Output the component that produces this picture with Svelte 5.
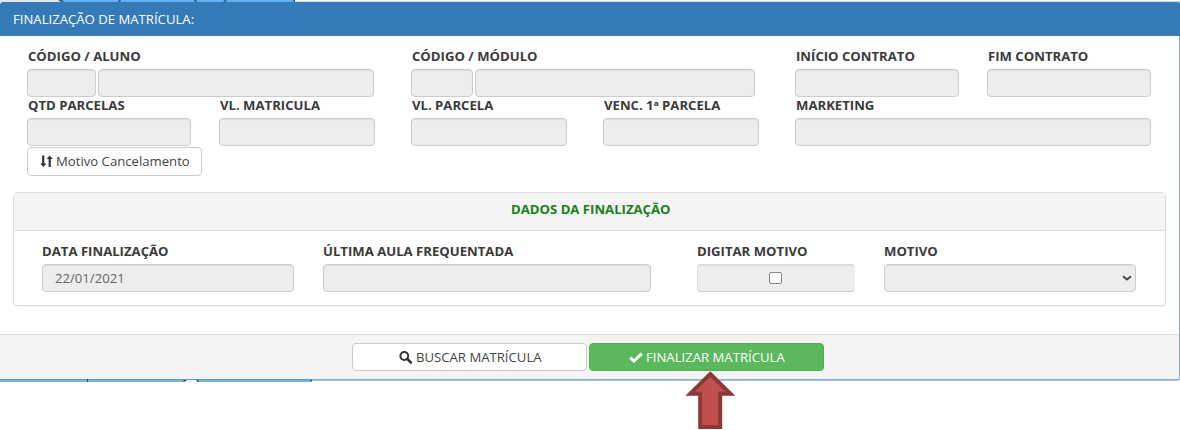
<script>
  const contract = [
    { label: 'CÓDIGO / ALUNO', span: 2, boxes: [69, 276] },
    { label: 'CÓDIGO / MÓDULO', span: 2, boxes: [62, 280] },
    { label: 'INÍCIO CONTRATO', span: 1, boxes: [164] },
    { label: 'FIM CONTRATO', span: 1, boxes: [164] }
  ];
  const values = [
    { label: 'QTD PARCELAS', span: 1, boxes: [164] },
    { label: 'VL. MATRICULA', span: 1, boxes: [156] },
    { label: 'VL. PARCELA', span: 1, boxes: [156] },
    { label: 'VENC. 1ª PARCELA', span: 1, boxes: [156] },
    { label: 'MARKETING', span: 2, boxes: [356] }
  ];
</script>

{#snippet row(fields)}
  <div class="row">
    {#each fields as field}
      <div class="field" style="grid-column: span {field.span}">
        <span class="label"><b>{field.label}</b></span>
        <div class="boxes">
          {#each field.boxes as width}
            <span class="box" style="width: {width}px"></span>
          {/each}
        </div>
      </div>
    {/each}
  </div>
{/snippet}

<div class="page">
  <svg class="strip top" width="1180" height="2" viewBox="0 0 1180 2">
    <path fill="#e3e6e8" d="M0 0h61v2H0z" />
    <path fill="#62b2f3" d="M61 0h233v2H61z" />
    <path fill="#c3d9e9" d="M296 1h884v1H296z" />
    <path fill="#29587f" d="M58 0h4l2 2h-3zM119 0h2l-1 2h-2zM194 0h2l1 2h-2zM225 0h2l-2 2h-2zM293 0h2v2h-1z" />
  </svg>
  <main class="panel">
    <header><span>FINALIZAÇÃO DE MATRÍCULA:</span></header>
    <section class="body">
      {@render row(contract)}
      {@render row(values)}
      <button class="reason">
        <svg width="13" height="13" viewBox="0 0 13 13" fill="#333"><path d="M2.100 0.500h2.200v8H6.400L3.400 12 .2 8.500h1.900zM8.600 12V4H6.600l3.100-3.500L12.800 4h-2v8z" /></svg>
        <span>Motivo Cancelamento</span>
      </button>
      <section class="inner">
        <h2><span>DADOS DA FINALIZAÇÃO</span></h2>
        <div class="finish">
          <div class="field">
            <span class="label"><b>DATA FINALIZAÇÃO</b></span>
            <div class="box date"><span>22/01/2021</span></div>
          </div>
          <div class="field">
            <span class="label"><b>ÚLTIMA AULA FREQUENTADA</b></span>
            <div class="box"></div>
          </div>
          <div class="field">
            <span class="label"><b>DIGITAR MOTIVO</b></span>
            <div class="box check"><i></i></div>
          </div>
          <div class="field">
            <span class="label"><b>MOTIVO</b></span>
            <div class="box select">
              <svg width="10" height="6" viewBox="0 0 10 6"><path d="M1 1.200 5 4.500 9 1.200" fill="none" stroke="#444" stroke-width="1.800" /></svg>
            </div>
          </div>
        </div>
      </section>
    </section>
    <footer>
      <button class="search">
        <svg width="13" height="13" viewBox="0 0 13 13" fill="none" stroke="#333"><circle cx="5.300" cy="5" r="3.900" stroke-width="2" /><path d="m8.200 7.800 3.700 3.700" stroke-width="2.500" stroke-linecap="round" /></svg>
        <span>BUSCAR MATRÍCULA</span>
      </button>
      <button class="done">
        <svg width="14" height="11" viewBox="0 0 14 11"><path d="m1.300 5.600 3.700 3.400 7.700-7.300" fill="none" stroke="#fff" stroke-width="3" /></svg>
        <span>FINALIZAR MATRÍCULA</span>
      </button>
    </footer>
  </main>
  <svg class="strip" width="1180" height="3" viewBox="0 0 1180 3">
    <path fill="#8fb2cf" d="M0 0h1180v1H0z" />
    <path fill="#b3c5d4" d="M0 1h1179v1H0z" />
    <path fill="#569bd3" d="M0 0h312v1.500H0z" />
    <path fill="#76b2e4" d="M0 1.500h312V3H0z" />
    <path fill="#f2f5f7" d="M186 1h10l2 2h-14z" />
    <path fill="#294b69" d="M87 0h1v3h-1zM184 1h3l-2 1.500h-2zM196 1h2l1 2h-1zM310 1h2v1h-2z" />
  </svg>
  <svg class="arrow" width="50" height="59" viewBox="0 0 50 59"><path d="M25.200 3 45.200 22.700H35.200V56H15.200V22.700H5.200z" fill="#c0504d" stroke="#8c3836" stroke-width="4" /></svg>
</div>

<style>
  :global(body) { margin: 0; background: #fff; }
  * { box-sizing: border-box; }
  .page { position: relative; width: 1180px; height: 430px; overflow: hidden; font-family: "Open Sans", sans-serif; font-size: 12px; color: #3a3a3a; }
  svg { display: block; flex: none; }
  .panel { height: 377px; border-right: 1px solid #7fa9cd; display: flex; flex-direction: column; }
  header { height: 34px; background: #337ab7; color: #fff; padding-left: 13px; line-height: 35px; border-radius: 3px 3px 0 0; margin-right: -1px; flex: none; }
  header span, button span, .date span, h2 span, .label b { display: inline-block; transform: scaleX(1.095); transform-origin: left center; white-space: nowrap; }
  .body { height: 298px; padding: 13px 13px 0; }
  .row { display: grid; grid-template-columns: repeat(6, 192px); padding-left: 14px; height: 49px; }
  .field { min-width: 0; }
  .label { display: block; height: 20px; line-height: 16px; padding-left: 0.500px; }
  .boxes { display: flex; gap: 2px; }
  .box { display: block; height: 28px; background: #ededed; border: 1px solid #ccc; border-radius: 4px; box-shadow: inset 0 1px 1px rgba(0, 0, 0, .06); flex: none; }
  button { display: flex; align-items: center; font: inherit; background: #fff; border: 1px solid #ccc; border-radius: 4px; height: 28px; padding: 0; color: #444; }
  .reason { width: 175px; height: 29px; margin: 0 0 16px 14px; padding-left: 12px; gap: 3px; }
  .inner { width: 1153px; height: 114px; border: 1px solid #ddd; border-radius: 4px; box-shadow: 0 1px 1px rgba(0, 0, 0, .06); }
  h2 { margin: 0; height: 38px; padding-left: 497px; background: #f4f4f4; border-bottom: 1px solid #ddd; font-size: 12px; line-height: 34px; color: #18801a; }
  .finish { display: grid; grid-template-columns: 252px 328px 158px 252px; column-gap: 29px; padding: 13px 0 0 28px; }
  .finish .field:nth-child(3), .finish .field:nth-child(4) { margin-left: 17px; margin-right: -17px; }
  .finish .label { padding-left: 0; }
  .date { padding-left: 12px; line-height: 28px; color: #666; }
  .check { display: flex; align-items: center; justify-content: center; padding-right: 2px; border-color: #d8d8d8 #ededed #ccc #ddd; }
  .check i { width: 13px; height: 12px; background: #fff; border: 1px solid #858585; border-radius: 2px; }
  .select { display: flex; align-items: center; justify-content: flex-end; padding-right: 3px; }
  footer { height: 45px; border-top: 1px solid #ddd; background: #f4f4f4; display: flex; gap: 2px; padding: 8px 0 0 352px; }
  .search { width: 235px; padding-left: 46px; gap: 3.500px; }
  .done { width: 235px; background: #5cb85c; border-color: #4fb04f; color: #fff; padding-left: 39px; gap: 2.500px; }
  .arrow { position: absolute; left: 685px; top: 371px; }
</style>
